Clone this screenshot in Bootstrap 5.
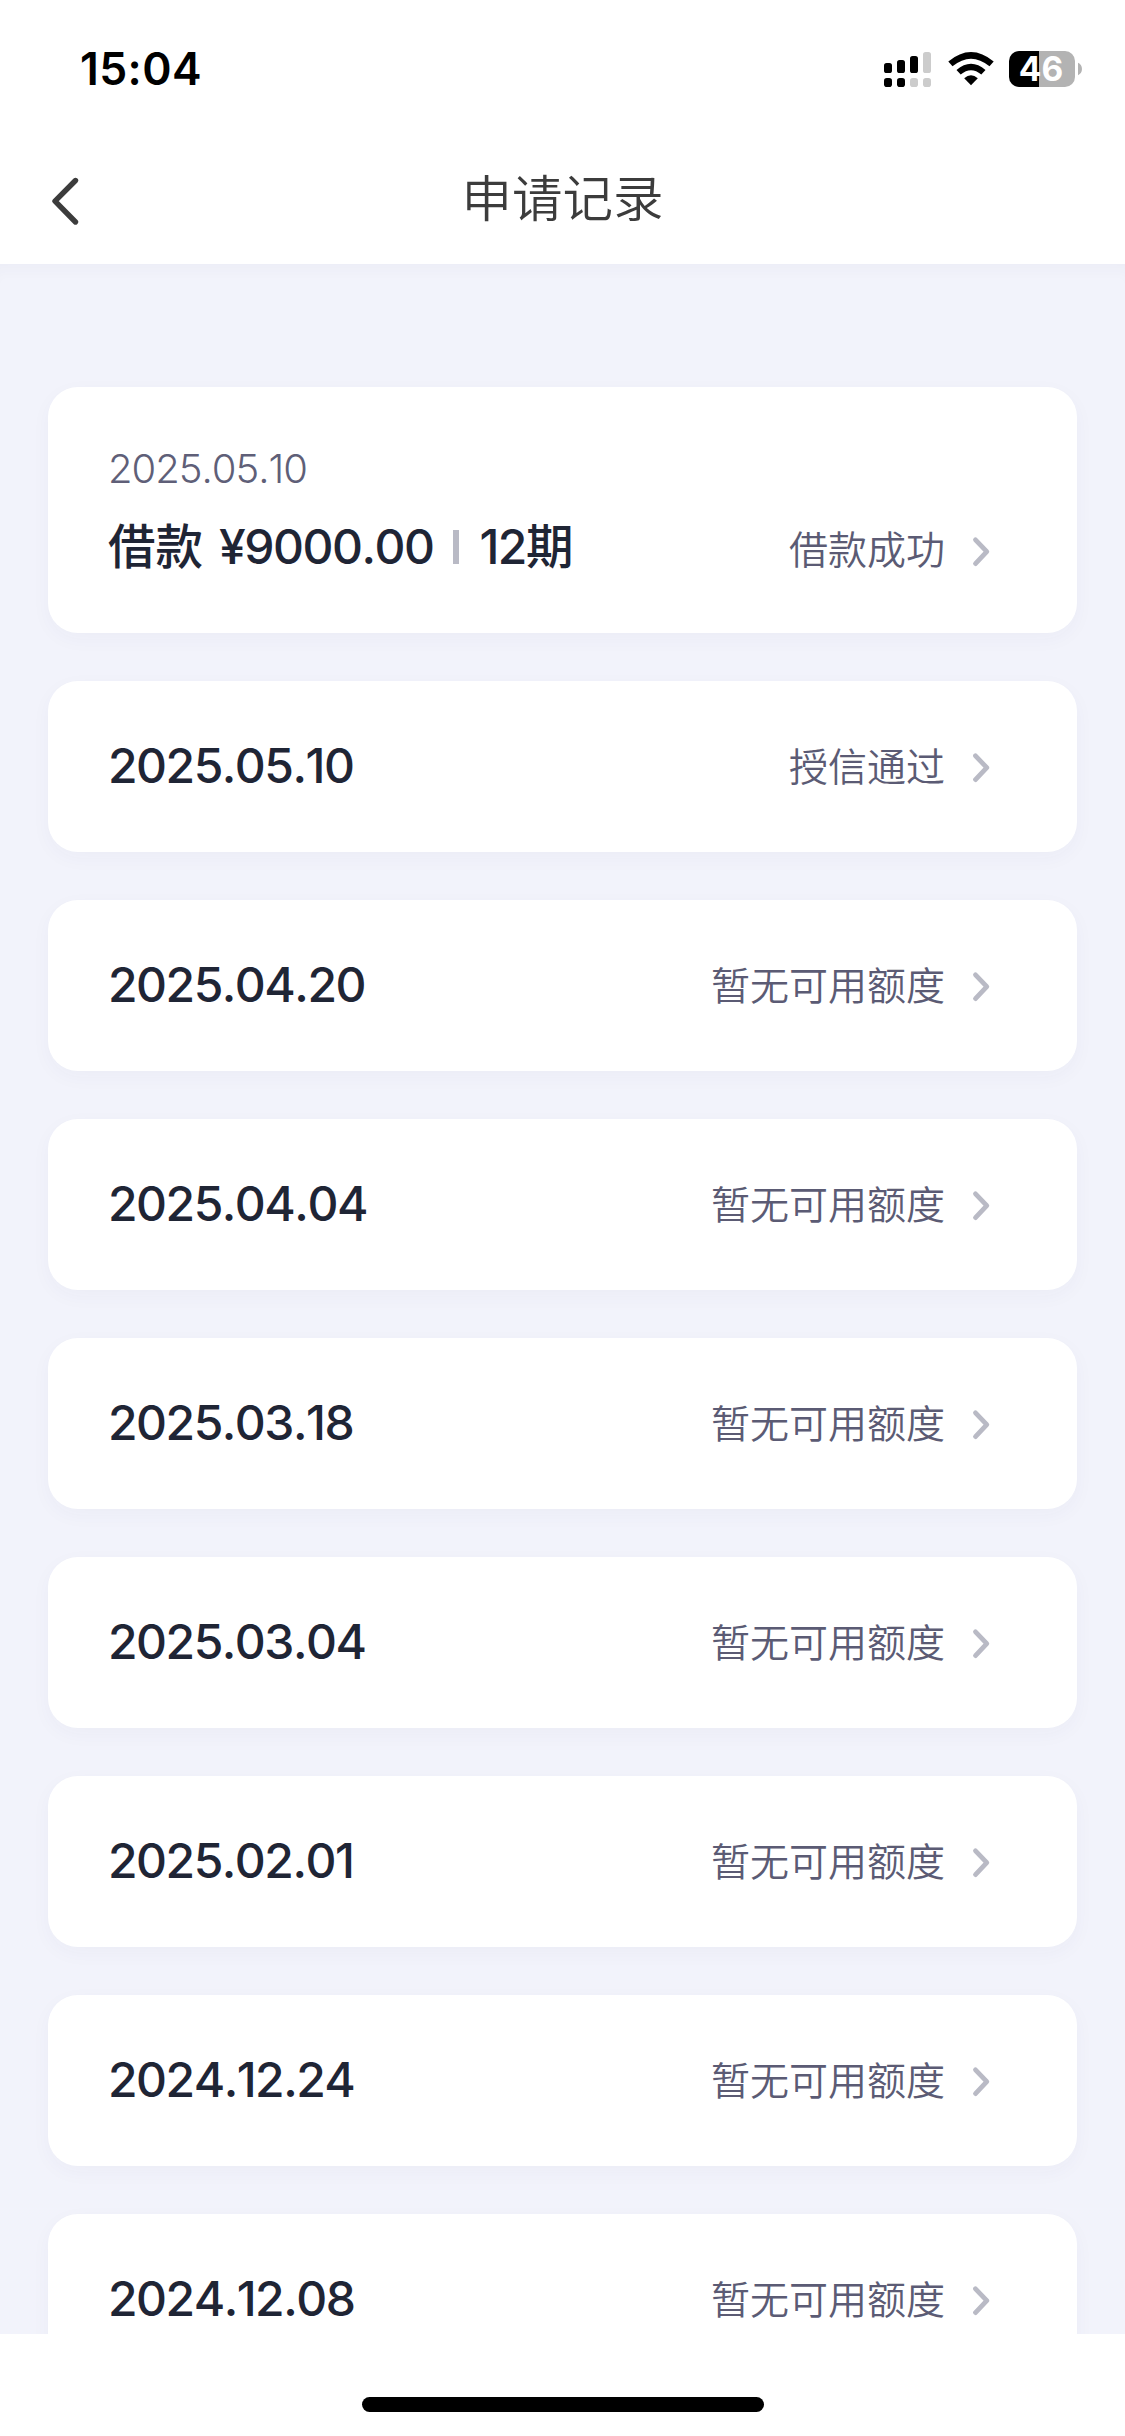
<!DOCTYPE html>
<html lang="zh-CN">
<head>
<meta charset="utf-8">
<meta name="viewport" content="width=device-width, initial-scale=1">
<title>申请记录</title>
<link rel="stylesheet" href="https://cdn.jsdelivr.net/npm/bootstrap@5.3.0/dist/css/bootstrap.min.css">
<style>
body{font-family:Inter,"Noto Sans CJK SC",sans-serif;background:#fff}
.screen{height:2436px}
.statusbar{height:132px;padding:39px 43px 0 80px}
.clock{font-size:44.5px;font-weight:600;line-height:60px;letter-spacing:.4px;color:#000}
.titlebar{height:132px;padding:0 50px}
.titlebar h1{font-size:50.5px;font-weight:350;line-height:64px;color:#3c3c3c;padding-top:2px}
.side-slot{width:60px;padding-top:5px}
.records{background:#f2f3fb;padding:123px 48px 0;gap:48px;box-shadow:inset 0 14px 14px -8px rgba(60,60,90,.03)}
.record{height:171px;border-radius:30px;padding:0 86px 0 60px;color:#1f2535;box-shadow:0 6px 20px rgba(70,70,100,.035)}
.record-loan{height:246px;padding-top:52px;padding-bottom:53px}
.main-line{font-size:48px;font-weight:500;line-height:60px;letter-spacing:-1.5px;font-kerning:none;padding-bottom:1px}
.record-loan .main-line{margin:18px 0 2px}
.sub-line{font-size:40px;font-weight:350;line-height:60px;letter-spacing:-1px;color:#5f5f78;font-kerning:none}
.hanzi{letter-spacing:0;font-size:47.5px}
.divider{width:6px;height:34px;background:#b9bac5;margin:0 20px}
.state{font-size:39px;font-weight:350;line-height:60px;color:#5b5b74}
.homebar{height:102px;padding-top:63px}
.homebar div{width:402px;height:15px;background:#000}
</style>
</head>
<body>
<div class="screen d-flex flex-column overflow-hidden">
  <header class="bg-white flex-shrink-0">
    <div class="statusbar d-flex justify-content-between align-items-start">
      <div class="clock">15:04</div>
      <svg width="198" height="40" viewBox="884 50 198 40" style="margin-top:11px">
        <g>
          <rect x="884" y="63" width="8" height="10" rx="2.6"/><rect x="897" y="60" width="8" height="13" rx="2.6"/><rect x="910" y="56" width="8" height="17" rx="2.6"/>
          <rect x="884" y="78" width="8" height="9" rx="2.8"/><rect x="897" y="78" width="8" height="9" rx="2.8"/>
          <g fill="#ccc"><rect x="923" y="52" width="8" height="21" rx="2.6"/><rect x="910" y="78" width="8" height="9" rx="2.8"/><rect x="923" y="78" width="8" height="9" rx="2.8"/></g>
        </g>
        <path d="M948.3 61.5Q971 42.500 993.700 61.500L989.500 66.300Q971 51 952.500 66.300Z"/>
        <path d="M956.500 70Q971 57.500 985.500 70L981.300 74.600Q971 66 960.700 74.600Z"/>
        <path d="M964.200 78.200Q971 72.500 977.800 78.200L971 85.200Z"/>
        <path d="M1039 51H1019a10 10 0 0 0-10 10v16a10 10 0 0 0 10 10h20z"/>
        <path fill="#b3b3b3" d="M1039 51h26a10 10 0 0 1 10 10v16a10 10 0 0 1-10 10h-26zM1078 62.800c5.300 2.200 5.300 10.200 0 12.400z"/>
        <text x="1041" y="81.300" text-anchor="middle" font-size="33.500" font-weight="700" fill="#fff">46</text>
      </svg>
    </div>
    <nav class="titlebar d-flex justify-content-between align-items-center">
      <div class="side-slot"><svg class="d-block" width="32" height="50" viewBox="0 0 32 50"><path d="M25.500 4.500L5 25.200L25.500 46" fill="none" stroke="#3c3c3c" stroke-width="5.400" stroke-linecap="round" stroke-linejoin="round"/></svg></div>
      <h1 class="m-0">申请记录</h1>
      <div class="side-slot"></div>
    </nav>
  </header>
  <main class="records d-flex flex-column flex-grow-1 overflow-hidden" id="records">
    <article class="record record-loan bg-white d-flex justify-content-between align-items-end flex-shrink-0">
      <div>
        <div class="sub-line">2025.05.10</div>
        <div class="main-line d-flex align-items-center"><span class="hanzi me-3">借款</span><span>¥9000.00</span><span class="divider"></span><span>12<span class="hanzi">期</span></span></div>
      </div>
      <div class="state d-flex align-items-center">借款成功</div>
    </article>
  </main>
  <footer class="homebar bg-white d-flex justify-content-center flex-shrink-0"><div class="rounded-pill"></div></footer>
</div>
<script src="https://cdn.jsdelivr.net/npm/bootstrap@5.3.0/dist/js/bootstrap.bundle.min.js"></script>
<script>
const none = '暂无可用额度';
const rows = [['2025.05.10','授信通过'],['2025.04.20',none],['2025.04.04',none],['2025.03.18',none],['2025.03.04',none],['2025.02.01',none],['2024.12.24',none],['2024.12.08',none]];
const list = document.getElementById('records');
rows.forEach(([date, state]) => list.insertAdjacentHTML('beforeend',
  `<article class="record bg-white d-flex justify-content-between align-items-center flex-shrink-0"><div class="main-line">${date}</div><div class="state d-flex align-items-center">${state}</div></article>`));
document.querySelectorAll('.state').forEach(el => el.insertAdjacentHTML('beforeend',
  '<svg style="margin:3px 0 0 26px" width="20" height="32" viewBox="0 0 20 32"><path d="M4.500 3.800L15.800 15.700L4.500 27.600" fill="none" stroke="#b9bac5" stroke-width="4.800" stroke-linecap="round" stroke-linejoin="round"/></svg>'));
</script>
</body>
</html>
